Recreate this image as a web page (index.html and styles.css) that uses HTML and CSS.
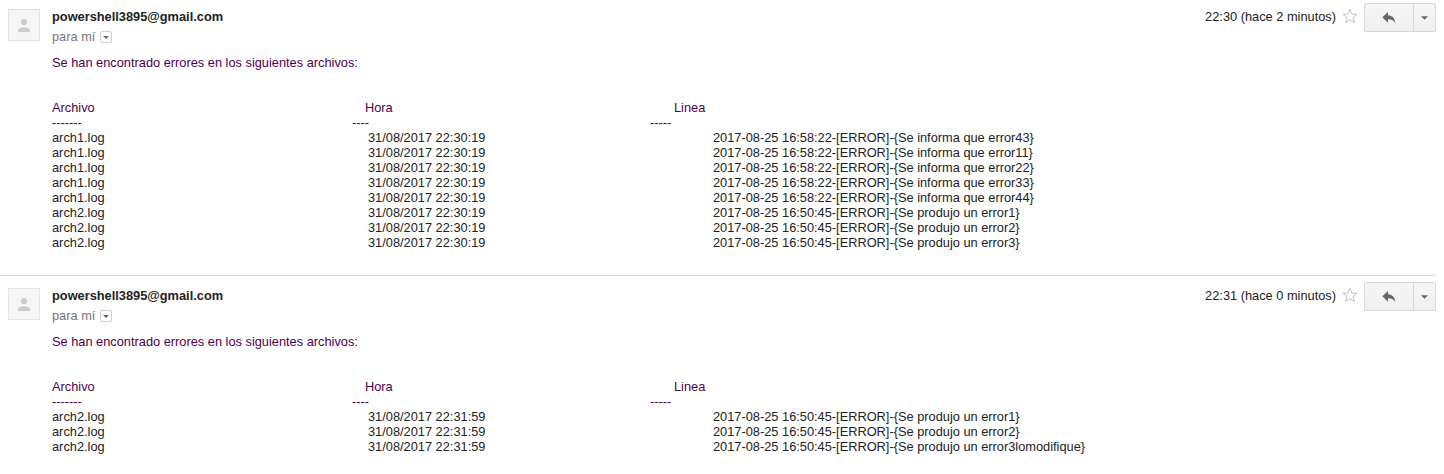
FILE: index.html
```
<!DOCTYPE html>
<html lang="es">
<head>
<meta charset="utf-8">
<title>Correo</title>
<link rel="stylesheet" href="styles.css">
</head>
<body>
<svg width="0" height="0" class="defs">
  <symbol id="person" viewBox="0 0 12 13"><circle cx="6" cy="3" r="3.1"/><path d="M0 13v-1.6C0 9.300 3.500 8.300 6 8.300s6 1 6 3.100V13z"/></symbol>
  <symbol id="star" viewBox="0 0 16 16"><path d="M8 1.300L9.900 6.100L15 6.300L11 9.500L12.500 14.600L8 11.700L3.500 14.600L5 9.500L1 6.300L6.100 6.100Z"/></symbol>
  <symbol id="reply" viewBox="0 0 14 12"><path d="M6 0v3.200C10.500 3.600 13 6.500 13.300 11C11.500 8.300 9.500 7.300 6 7.300v3.400L.4 5.300z"/></symbol>
  <symbol id="caret" viewBox="0 0 8 4"><path d="M0 0h8L4 4z"/></symbol>
</svg>
<main class="thread">
  <article class="message">
    <div class="avatar"><svg><use href="#person"/></svg></div>
    <div class="content">
      <header class="head">
        <div class="from">
          <div class="sender">powershell3895@gmail.com</div>
          <div class="to"><span>para mí</span><span class="details"><svg><use href="#caret"/></svg></span></div>
        </div>
        <div class="date">22:30 (hace 2 minutos)</div>
        <svg class="star"><use href="#star"/></svg>
        <div class="actions"><span class="reply"><svg><use href="#reply"/></svg></span><span class="more"><svg><use href="#caret"/></svg></span></div>
      </header>
      <div class="body">
        <p class="intro quoted">Se han encontrado errores en los siguientes archivos:</p>
        <div class="row titles quoted"><span>Archivo</span><span>Hora</span><span>Linea</span></div>
        <div class="row rules quoted"><span>-------</span><span>----</span><span>-----</span></div>
        <div class="row"><span>arch1.log</span><span>31/08/2017 22:30:19</span><span>2017-08-25 16:58:22-[ERROR]-{Se informa que error43}</span></div>
        <div class="row"><span>arch1.log</span><span>31/08/2017 22:30:19</span><span>2017-08-25 16:58:22-[ERROR]-{Se informa que error11}</span></div>
        <div class="row"><span>arch1.log</span><span>31/08/2017 22:30:19</span><span>2017-08-25 16:58:22-[ERROR]-{Se informa que error22}</span></div>
        <div class="row"><span>arch1.log</span><span>31/08/2017 22:30:19</span><span>2017-08-25 16:58:22-[ERROR]-{Se informa que error33}</span></div>
        <div class="row"><span>arch1.log</span><span>31/08/2017 22:30:19</span><span>2017-08-25 16:58:22-[ERROR]-{Se informa que error44}</span></div>
        <div class="row"><span>arch2.log</span><span>31/08/2017 22:30:19</span><span>2017-08-25 16:50:45-[ERROR]-{Se produjo un error1}</span></div>
        <div class="row"><span>arch2.log</span><span>31/08/2017 22:30:19</span><span>2017-08-25 16:50:45-[ERROR]-{Se produjo un error2}</span></div>
        <div class="row"><span>arch2.log</span><span>31/08/2017 22:30:19</span><span>2017-08-25 16:50:45-[ERROR]-{Se produjo un error3}</span></div>
      </div>
    </div>
  </article>
  <article class="message">
    <div class="avatar"><svg><use href="#person"/></svg></div>
    <div class="content">
      <header class="head">
        <div class="from">
          <div class="sender">powershell3895@gmail.com</div>
          <div class="to"><span>para mí</span><span class="details"><svg><use href="#caret"/></svg></span></div>
        </div>
        <div class="date">22:31 (hace 0 minutos)</div>
        <svg class="star"><use href="#star"/></svg>
        <div class="actions"><span class="reply"><svg><use href="#reply"/></svg></span><span class="more"><svg><use href="#caret"/></svg></span></div>
      </header>
      <div class="body">
        <p class="intro quoted">Se han encontrado errores en los siguientes archivos:</p>
        <div class="row titles quoted"><span>Archivo</span><span>Hora</span><span>Linea</span></div>
        <div class="row rules quoted"><span>-------</span><span>----</span><span>-----</span></div>
        <div class="row"><span>arch2.log</span><span>31/08/2017 22:31:59</span><span>2017-08-25 16:50:45-[ERROR]-{Se produjo un error1}</span></div>
        <div class="row"><span>arch2.log</span><span>31/08/2017 22:31:59</span><span>2017-08-25 16:50:45-[ERROR]-{Se produjo un error2}</span></div>
        <div class="row"><span>arch2.log</span><span>31/08/2017 22:31:59</span><span>2017-08-25 16:50:45-[ERROR]-{Se produjo un error3lomodifique}</span></div>
      </div>
    </div>
  </article>
</main>
</body>
</html>
```
FILE: styles.css
```
body {
  margin: 0;
  background: #fff;
  color: #222;
  font: 12.8px/15px "Liberation Sans", Arial, sans-serif;
}
.defs { display: block; height: 0; }
.thread { width: 1436px; }
.message {
  display: flex;
  gap: 12px;
  padding: 3px 0 25px 8px;
}
.message + .message {
  padding-top: 6px;
  border-top: 1px solid #d8d8d8;
}
.avatar {
  display: flex;
  align-items: center;
  justify-content: center;
  box-sizing: border-box;
  width: 32px;
  height: 32px;
  margin-top: 6px;
  border: 1px solid #e4e4e4;
  background: #f5f5f5;
}
.avatar svg { width: 12px; height: 13px; fill: #ccc; }
.content { flex: 1; }
.head {
  display: flex;
  align-items: flex-start;
  height: 52px;
}
.from { flex: 1; padding-top: 6px; }
.sender { font-weight: bold; }
.to {
  display: flex;
  align-items: center;
  gap: 5px;
  margin-top: 5px;
  color: #777;
}
.details {
  display: flex;
  align-items: center;
  justify-content: center;
  box-sizing: border-box;
  width: 12px;
  height: 12px;
  margin-top: 1px;
  border: 1px solid #ccc;
  border-radius: 2px;
}
.details svg { width: 6px; height: 3px; fill: #666; }
.date { padding-top: 6px; }
.star {
  width: 16px;
  height: 16px;
  margin: 5px 6px 0 6px;
  fill: none;
  stroke: #c4c4c4;
}
.actions {
  display: flex;
  box-sizing: border-box;
  width: 72px;
  height: 29px;
  border: 1px solid #d8d8d8;
  border-radius: 2px;
  background: linear-gradient(#f6f6f6, #f0f0f0);
}
.reply, .more {
  display: flex;
  align-items: center;
  justify-content: center;
}
.reply { width: 48px; border-right: 1px solid #d8d8d8; }
.more { flex: 1; }
.reply svg { width: 14px; height: 12px; fill: #666; }
.more svg { width: 7px; height: 4px; fill: #666; }
.intro { margin: 0 0 30px; }
.quoted { color: #500050; }
.row {
  display: grid;
  grid-template-columns: 316px 345px auto;
  height: 15px;
  white-space: nowrap;
}
.titles { grid-template-columns: 313px 309px auto; }
.rules { grid-template-columns: 300px 298px auto; }
```
